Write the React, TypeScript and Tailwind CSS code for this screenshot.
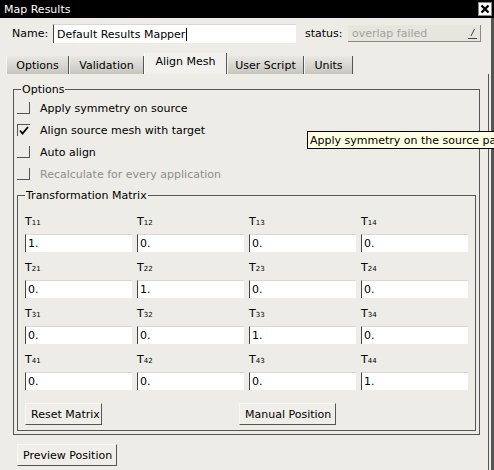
import React from "react";

const Check = ({ checked }: { checked?: boolean }) =>
  checked ? (
    <div className="w-[13px] h-[12px] border-l border-t border-[#555] bg-[#edece6] flex items-center justify-center">
      <svg width="10" height="9" viewBox="0 0 10 9">
        <path d="M1 4.5 L3.5 7.5 L9 1" stroke="#000" strokeWidth="1.8" fill="none" />
      </svg>
    </div>
  ) : (
    <div className="w-[13px] h-[12px] border-r border-b border-[#555] bg-[#edece6]" />
  );

const Btn = ({ label, className = "" }: { label: string; className?: string }) => (
  <div
    className={`h-[22px] px-[5px] flex items-center border-t border-l border-t-[#f8f8f6] border-l-[#f8f8f6] border-r border-b border-r-[#555] border-b-[#555] bg-[#efeee9] text-black whitespace-nowrap ${className}`}
  >
    {label}
  </div>
);

const Tab = ({ label, w, selected }: { label: string; w: string; selected?: boolean }) =>
  selected ? (
    <div className={`${w} h-[21px] bg-[#f2f1ed] border-r border-[#555] border-l border-l-[#fbfbf9] flex items-start justify-center pt-[3px] text-black`}>
      {label}
    </div>
  ) : (
    <div className={`${w} h-[18px] bg-gradient-to-b from-[#e9e8e3] to-[#c6c5be] border-r border-[#555] border-l border-l-[#f4f4f1] flex items-center justify-center text-black`}>
      {label}
    </div>
  );

const cells: [string, string][] = [
  ["11", "1."], ["12", "0."], ["13", "0."], ["14", "0."],
  ["21", "0."], ["22", "1."], ["23", "0."], ["24", "0."],
  ["31", "0."], ["32", "0."], ["33", "1."], ["34", "0."],
  ["41", "0."], ["42", "0."], ["43", "0."], ["44", "1."],
];

export default function App() {
  return (
    <div className="w-[494px] h-[470px] bg-[#edece6] overflow-hidden relative font-['DejaVu_Sans',sans-serif] text-[11px] text-black leading-none">
      {/* title bar */}
      <div className="h-[18px] bg-black flex items-center justify-between pl-[4px] pr-[2px]">
        <span className="text-white text-[11px]">Map Results</span>
        <div className="w-[14px] h-[14px] bg-white border border-[#888] flex items-center justify-center">
          <svg width="10" height="10" viewBox="0 0 10 10">
            <path d="M1.5 1.5 L8.5 8.5 M8.5 1.5 L1.5 8.5" stroke="#000" strokeWidth="2.4" />
          </svg>
        </div>
      </div>

      <div className="h-[452px] border-r-[3px] border-[#555]">
        {/* name row */}
        <div className="flex items-start pt-[6px] pl-[12px]">
          <span className="mt-[4px] w-[41px]">Name:</span>
          <div className="w-[243px] h-[19px] bg-white border-l border-t border-l-[#444] border-t-[#d8d7d2] flex items-center pl-[3px]">
            <span>Default Results Mapper</span>
            <span className="w-[1px] h-[13px] bg-black ml-[1px]" />
          </div>
          <span className="ml-[9px] mt-[4px] w-[43px]">status:</span>
          <div className="mt-[1px] w-[133px] h-[17px] bg-[#e6e5de] border-r border-b border-[#8a8984] flex items-center justify-between pl-[4px] pr-[3px]">
            <span className="text-[#a3a29c]">overlap failed</span>
            <svg width="9" height="12" viewBox="0 0 9 12">
              <path d="M6.5 2 L3 9" stroke="#444" strokeWidth="1" />
              <path d="M0 11.5 L9 11.5" stroke="#444" strokeWidth="1" />
            </svg>
          </div>
        </div>

        {/* tabs */}
        <div className="flex items-end pl-[6px] mt-[10px] h-[21px]">
          <Tab label="Options" w="w-[63px]" />
          <Tab label="Validation" w="w-[75px]" />
          <Tab label="Align Mesh" w="w-[83px]" selected />
          <Tab label="User Script" w="w-[77px]" />
          <Tab label="Units" w="w-[49px]" />
        </div>

        {/* tab panel */}
        <div className="ml-[6px] w-[483px] h-[400px] border-r border-[#555] pt-[15px] pl-[7px]">
          {/* Options group */}
          <div className="relative w-[467px] h-[346px] border border-[#555] pt-[7px] px-[3px]">
            <span className="absolute -top-[7px] left-[7px] bg-[#edece6] px-[1px] leading-[13px]">Options</span>
            {[
              { l: "Apply symmetry on source", c: false },
              { l: "Align source mesh with target", c: true },
              { l: "Auto align", c: false },
              { l: "Recalculate for every application", c: false, d: true },
            ].map((r) => (
              <div key={r.l} className="h-[22px] flex items-center">
                <Check checked={r.c} />
                <span className={`ml-[10px] ${r.d ? "text-[#8f8f8a]" : ""}`}>{r.l}</span>
              </div>
            ))}

            {/* Transformation Matrix group */}
            <div className="relative mt-[10px] w-[459px] h-[236px] border border-[#555] pt-[10px] pl-[7px]">
              <span className="absolute -top-[7px] left-[7px] bg-[#edece6] px-[1px] leading-[13px]">Transformation Matrix</span>
              <div className="grid grid-cols-[107px_107px_107px_107px] gap-x-[5px]">
                {cells.map(([s, v]) => (
                  <div key={s} className="flex flex-col">
                    <div className="h-[28px] flex items-center pt-[2px]">
                      <span>T</span>
                      <span className="text-[7px] mt-[5px]">{s}</span>
                    </div>
                    <div className="h-[18px] bg-white border-l border-t border-l-[#444] border-t-[#d8d7d2] flex items-center pl-[2px]">
                      {v}
                    </div>
                  </div>
                ))}
              </div>
              <div className="flex mt-[13px]">
                <Btn label="Reset Matrix" className="w-[77px]" />
                <Btn label="Manual Position" className="ml-[137px] w-[97px]" />
              </div>
            </div>
          </div>

          <div className="mt-[9px] ml-[4px] flex">
            <Btn label="Preview Position" className="w-[100px]" />
          </div>
        </div>
      </div>

      {/* tooltip */}
      <div className="absolute left-[307px] top-[131px] h-[18px] pl-[2px] pr-[2px] bg-[#ffffe1] border border-black flex items-center whitespace-nowrap">
        Apply symmetry on the source pa
      </div>
    </div>
  );
}
